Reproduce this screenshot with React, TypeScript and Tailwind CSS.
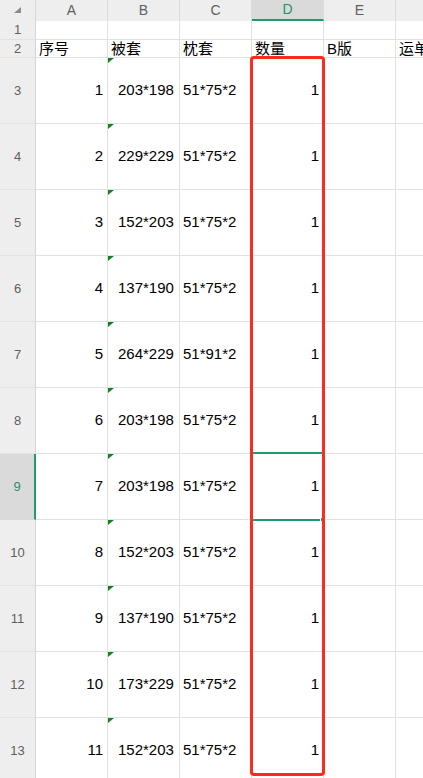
import React from 'react';

type Row = { seq: number; quilt: string; pillow: string; qty: number };

const columns = ['A', 'B', 'C', 'D', 'E', 'F'];

const rows: Row[] = [
  { seq: 1, quilt: '203*198', pillow: '51*75*2', qty: 1 },
  { seq: 2, quilt: '229*229', pillow: '51*75*2', qty: 1 },
  { seq: 3, quilt: '152*203', pillow: '51*75*2', qty: 1 },
  { seq: 4, quilt: '137*190', pillow: '51*75*2', qty: 1 },
  { seq: 5, quilt: '264*229', pillow: '51*91*2', qty: 1 },
  { seq: 6, quilt: '203*198', pillow: '51*75*2', qty: 1 },
  { seq: 7, quilt: '203*198', pillow: '51*75*2', qty: 1 },
  { seq: 8, quilt: '152*203', pillow: '51*75*2', qty: 1 },
  { seq: 9, quilt: '137*190', pillow: '51*75*2', qty: 1 },
  { seq: 10, quilt: '173*229', pillow: '51*75*2', qty: 1 },
  { seq: 11, quilt: '152*203', pillow: '51*75*2', qty: 1 },
];

const font = { fontFamily: '"Liberation Sans", "Noto Sans CJK SC", sans-serif' };

// little green "number stored as text" flag in the cell corner
const TextFlag = () => (
  <svg className="absolute left-0 top-0" width="6" height="6" viewBox="0 0 6 6">
    <polygon points="0,0 6,0 0,5" fill="#13801f" />
  </svg>
);

const RowHeader = ({ n, active, h }: { n: number; active?: boolean; h: string }) => (
  <div
    className={`${h} w-[36px] shrink-0 flex items-center justify-center text-[13px] border-b ${
      active
        ? 'bg-[#dadada] text-[#1d9467] border-r-2 border-r-[#1e9c6b] border-b-[#d8d8d8]'
        : 'bg-[#eeeeee] text-[#5f5f5f] border-r border-r-[#d6d6d6] border-b-[#e2e2e2]'
    }`}
  >
    {n}
  </div>
);

const Cell = ({
  children,
  align = 'left',
  flag,
  last,
}: {
  children?: React.ReactNode;
  align?: 'left' | 'right';
  flag?: boolean;
  last?: boolean;
}) => (
  <div
    className={`relative w-[72px] shrink-0 flex items-center border-b border-[#e1e1e1] ${
      last ? '' : 'border-r'
    } ${align === 'right' ? 'justify-end pr-[4px]' : 'pl-[3px]'}`}
  >
    {flag && <TextFlag />}
    {children}
  </div>
);

export default function App() {
  return (
    <div className="relative w-[423px] h-[778px] overflow-hidden bg-white text-black" style={font}>
      {/* column letters */}
      <div className="flex h-[21px] bg-[#eeeeee] text-[14px] text-[#5f5f5f]">
        <div className="w-[36px] shrink-0 flex items-center justify-center border-r border-[#d6d6d6]">
          <svg width="8" height="7" viewBox="0 0 8 7" className="ml-[1px]">
            <polygon points="7,0 7,6 0,6" fill="#8a8a8a" />
          </svg>
        </div>
        {columns.map((c) => (
          <div
            key={c}
            className={`w-[72px] shrink-0 flex items-center justify-center border-r border-[#dcdcdc] ${
              c === 'D' ? 'bg-[#dadada] text-[#1d9467] border-b-2 border-b-[#1e9c6b]' : ''
            }`}
          >
            {c}
          </div>
        ))}
      </div>

      {/* row 1 */}
      <div className="flex h-[19px]">
        <RowHeader n={1} h="h-[19px]" />
        {columns.map((c, i) => (
          <Cell key={c} last={i === columns.length - 1} />
        ))}
      </div>

      {/* row 2: titles */}
      <div className="flex h-[18px] text-[15px] leading-none">
        <RowHeader n={2} h="h-[18px]" />
        <Cell>序号</Cell>
        <Cell>被套</Cell>
        <Cell>枕套</Cell>
        <Cell>数量</Cell>
        <Cell>B版</Cell>
        <Cell last>运单号</Cell>
      </div>

      {rows.map((r, i) => (
        <div key={r.seq} className="flex h-[66px] text-[15px]">
          <RowHeader n={i + 3} h="h-[66px]" active={i + 3 === 9} />
          <Cell align="right">{r.seq}</Cell>
          <Cell flag>
            <span className="pl-[7px]">{r.quilt}</span>
          </Cell>
          <Cell>{r.pillow}</Cell>
          <Cell align="right">{r.qty}</Cell>
          <Cell />
          <Cell last />
        </div>
      ))}

      {/* active cell D9 */}
      <div className="absolute left-[251px] top-[452px] w-[73px] h-[69px] border-2 border-[#1e9c6b]" />
      <div className="absolute left-[320px] top-[517px] w-[5px] h-[5px] bg-[#1e9c6b] border border-white" />

      {/* red markup around column D */}
      <div className="absolute left-[250px] top-[56px] w-[75px] h-[720px] rounded-[4px] border-[3px] border-[#ff2a1f]" />
    </div>
  );
}
